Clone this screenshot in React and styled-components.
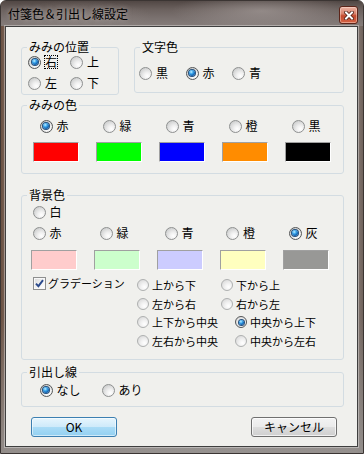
import React from 'react';
import styled, { createGlobalStyle } from 'styled-components';

const Global = createGlobalStyle`
  *, *::before, *::after { box-sizing: border-box; }
  html, body { margin: 0; padding: 0; background: #ffffff; }
  body { font-family: "Noto Sans CJK JP", "Noto Sans", sans-serif; color: #000; }
`;

const Win = styled.div`
  width: 364px;
  height: 454px;
  display: flex;
  flex-direction: column;
  border: 1px solid #3b3533;
  border-radius: 6px 6px 0 0;
  overflow: hidden;
  background:
    linear-gradient(180deg, rgba(0,0,0,0) 0%, rgba(0,0,0,0) 70%, rgba(150,146,144,0.9) 100%),
    linear-gradient(90deg, #6b5142 0%, #7d6a60 2%, #948c88 50%, #8a7d77 98%, #6e625c 100%);
`;

const TitleBar = styled.div`
  height: 25px;
  flex: none;
  display: flex;
  align-items: flex-start;
  padding: 5px 0 0 7px;
  background:
    radial-gradient(ellipse 90px 18px at 72% 40%, rgba(176,168,166,0.55), rgba(176,168,166,0) 100%),
    radial-gradient(ellipse 70px 16px at 22% 60%, rgba(150,140,136,0.5), rgba(150,140,136,0) 100%),
    linear-gradient(180deg, #514744 0%, #6c625f 35%, #7b7270 70%, #857d7a 100%);
`;

const Title = styled.div`
  font-size: 12px;
  line-height: 16px;
  color: #000;
  white-space: nowrap;
  text-shadow: 0 0 5px rgba(230, 226, 224, 0.55);
`;

const CloseBtn = styled.div`
  width: 19px;
  height: 18px;
  margin: 0 5px 0 auto;
  border: 1px solid #5c2419;
  border-radius: 3px;
  display: grid;
  place-items: center;
  background: linear-gradient(180deg, #eab2a3 0%, #d9836d 42%, #c44a2e 55%, #d46244 100%);
  box-shadow: inset 0 0 0 1px rgba(255, 230, 220, 0.45);
`;

const Client = styled.div`
  flex: 1;
  margin: 0 5px 6px 4px;
  border: 1px solid #3f3f3f;
  background: #f0f0ed;
  padding: 13px 13px 9px 15px;
  display: flex;
  flex-direction: column;
  box-shadow: 0 0 0 1px rgba(255, 255, 255, 0.35);
`;

const TopRow = styled.div`
  display: flex;
  gap: 15px;
  align-items: flex-start;
`;

const Group = styled.fieldset`
  margin: ${p => p.$mt || 0}px 0 0 0;
  padding: 0;
  min-width: 0;
  width: ${p => (p.$w ? `${p.$w}px` : '323px')};
  height: ${p => p.$h}px;
  border: 1px solid #d3dce2;
  border-radius: 3px;
`;

const Legend = styled.legend`
  margin-left: 5px;
  padding: 0 2px;
  font-size: 12px;
  line-height: 14px;
  color: #000;
`;

const RadioGrid = styled.div`
  display: grid;
  grid-template-columns: repeat(${p => p.$cols}, ${p => p.$colw}px);
  row-gap: ${p => p.$rgap || 0}px;
  grid-auto-rows: 16px;
  padding: ${p => p.$pt || 0}px 0 0 ${p => p.$pl}px;
`;

const ColorGrid = styled.div`
  display: grid;
  grid-template-columns: repeat(5, 63px);
  grid-template-rows: 16px 20px;
  row-gap: ${p => p.$rgap}px;
  padding: ${p => p.$pt || 0}px 0 0 ${p => p.$pl || 0}px;
`;

const Swatch = styled.div`
  width: 46px;
  height: 20px;
  background: ${p => p.$c};
  border: 1px solid;
  border-color: #a0a0a0 #ffffff #ffffff #a0a0a0;
`;

const BgInner = styled.div`
  display: flex;
  flex-direction: column;
  padding: 2px 0 0 9px;
`;

const GradGrid = styled.div`
  margin-top: 7px;
  display: grid;
  grid-template-columns: 106px 84px auto;
  grid-auto-rows: 16px;
  row-gap: 2.5px;
`;

const CheckItem = styled.div`
  display: inline-flex;
  align-items: center;
  gap: 2px;
  height: 16px;
  margin: -2px 0 0 2px;
  grid-row: 1;
  grid-column: 1;
`;

const CheckBox = styled.span`
  width: 13px;
  height: 13px;
  flex: none;
  border: 1px solid #8e8f8f;
  background: linear-gradient(135deg, #d8d9d9 0%, #f4f4f4 60%, #ffffff 100%);
  box-shadow: inset 0 0 0 1px #f8f8f8;
  display: grid;
  place-items: center;
`;

const CheckText = styled.span`
  font-size: 11px;
  line-height: 14px;
  white-space: nowrap;
`;

const RadioItem = styled.div`
  display: inline-flex;
  align-items: center;
  gap: ${p => (p.$small ? 3 : 4)}px;
  height: 16px;
  justify-self: start;
  margin-left: ${p => p.$shift || 0}px;
`;

const Dot = styled.span`
  flex: none;
  width: ${p => p.$size}px;
  height: ${p => p.$size}px;
  border-radius: 50%;
  border: 1px solid ${p => (p.$on ? '#545657' : p.$small ? '#aeb0b0' : '#8e9090')};
  background: ${p =>
    p.$small
      ? 'radial-gradient(circle at 65% 70%, #ffffff 0%, #f2f2f2 35%, #dcdcdc 80%, #cfcfcf 100%)'
      : 'radial-gradient(circle at 66% 72%, #ffffff 0%, #f1f1f1 30%, #d3d4d4 72%, #bcbdbd 100%)'};
  display: grid;
  place-items: center;
  &::after {
    content: '';
    display: ${p => (p.$on ? 'block' : 'none')};
    width: ${p => p.$size - 7}px;
    height: ${p => p.$size - 7}px;
    border-radius: 50%;
    background: radial-gradient(circle at 38% 32%, #c6f0ff 0%, #45aef0 30%, #0f63b3 65%, #073f7c 100%);
    box-shadow: 0 0 0 1px #24507d;
  }
`;

const RadioText = styled.span`
  font-size: ${p => (p.$small ? 11 : 12)}px;
  line-height: ${p => (p.$focus ? 12 : 14)}px;
  white-space: nowrap;
  border: ${p => (p.$focus ? '1px dotted #000' : 'none')};
  margin-left: ${p => (p.$focus ? -1 : 0)}px;
`;

const ButtonRow = styled.div`
  margin-top: 10px;
  display: flex;
  justify-content: space-between;
  padding: 0 7px 0 10px;
`;

const Button = styled.div`
  width: 86px;
  height: 20px;
  border-radius: 3px;
  border: 1px solid ${p => (p.$default ? '#3c7fb1' : '#707070')};
  background: ${p =>
    p.$default
      ? 'linear-gradient(180deg, #e6f5fd 0%, #cfeafa 48%, #a9dbf6 52%, #93d0f1 100%)'
      : 'linear-gradient(180deg, #f3f3f3 0%, #ebebeb 48%, #dddddd 52%, #cfcfcf 100%)'};
  box-shadow: inset 0 0 0 1px ${p => (p.$default ? 'rgba(255,255,255,0.55)' : 'rgba(255,255,255,0.7)')};
  display: flex;
  align-items: center;
  justify-content: center;
  font-size: 12px;
  line-height: 14px;
  color: #000;
`;

function Radio({ label, on, small, focus, shift, style }) {
  return (
    <RadioItem $small={small} $shift={shift} style={style}>
      <Dot $on={on} $small={small} $size={small ? 12 : 13} />
      <RadioText $small={small} $focus={focus}>{label}</RadioText>
    </RadioItem>
  );
}

const earColors = [
  { label: '赤', c: '#ff0000', on: true },
  { label: '緑', c: '#00ff00' },
  { label: '青', c: '#0000ff' },
  { label: '橙', c: '#ff8c00' },
  { label: '黒', c: '#000000' },
];

const bgColors = [
  { label: '赤', c: '#ffcccc', shift: 1.5 },
  { label: '緑', c: '#ccffcc', shift: 5.5 },
  { label: '青', c: '#ccccff', shift: 7.5 },
  { label: '橙', c: '#ffffbf', shift: 6 },
  { label: '灰', c: '#989896', shift: 5.5, on: true },
];

const gradients = [
  { label: '上から下', col: 2, row: 1 },
  { label: '下から上', col: 3, row: 1 },
  { label: '左から右', col: 2, row: 2 },
  { label: '右から左', col: 3, row: 2 },
  { label: '上下から中央', col: 2, row: 3 },
  { label: '中央から上下', col: 3, row: 3, shift: 14, on: true },
  { label: '左右から中央', col: 2, row: 4 },
  { label: '中央から左右', col: 3, row: 4, shift: 14 },
];

export default function App() {
  return (
    <>
      <Global />
      <Win>
        <TitleBar>
          <Title>付箋色＆引出し線設定</Title>
          <CloseBtn>
            <svg width="10" height="9" viewBox="0 0 10 9">
              <path d="M2 1.5 L8 7.5 M8 1.5 L2 7.5" stroke="#4a1a10" strokeWidth="3.6" strokeLinecap="square" />
              <path d="M2 1.5 L8 7.5 M8 1.5 L2 7.5" stroke="#ffffff" strokeWidth="2" strokeLinecap="square" />
            </svg>
          </CloseBtn>
        </TitleBar>
        <Client>
          <TopRow>
            <Group $w={98} $h={55}>
              <Legend>みみの位置</Legend>
              <RadioGrid $cols={2} $colw={42} $rgap={5} $pl={6}>
                <Radio label="右" on focus />
                <Radio label="上" />
                <Radio label="左" />
                <Radio label="下" />
              </RadioGrid>
            </Group>
            <Group $w={210} $h={53}>
              <Legend>文字色</Legend>
              <RadioGrid $cols={3} $colw={46.5} $pt={11} $pl={4}>
                <Radio label="黒" />
                <Radio label="赤" on />
                <Radio label="青" />
              </RadioGrid>
            </Group>
          </TopRow>

          <Group $h={76} $mt={3}>
            <Legend>みみの色</Legend>
            <ColorGrid $rgap={8} $pt={6} $pl={11}>
              {earColors.map(e => (
                <Radio key={e.label} label={e.label} on={e.on} shift={6.5} />
              ))}
              {earColors.map(e => (
                <Swatch key={e.label + 's'} $c={e.c} />
              ))}
            </ColorGrid>
          </Group>

          <Group $h={172} $mt={14}>
            <Legend>背景色</Legend>
            <BgInner>
              <Radio label="白" shift={1.5} />
              <ColorGrid $rgap={9} $pt={5}>
                {bgColors.map(e => (
                  <Radio key={e.label} label={e.label} on={e.on} shift={e.shift} />
                ))}
                {bgColors.map(e => (
                  <Swatch key={e.label + 's'} $c={e.c} />
                ))}
              </ColorGrid>
              <GradGrid>
                <CheckItem>
                  <CheckBox>
                    <svg width="9" height="9" viewBox="0 0 9 9">
                      <path d="M1 4.6 L3.4 7.2 L8 1.2" fill="none" stroke="#2b4a8c" strokeWidth="1.9" />
                    </svg>
                  </CheckBox>
                  <CheckText>グラデーション</CheckText>
                </CheckItem>
                {gradients.map(g => (
                  <Radio
                    key={g.label}
                    label={g.label}
                    small
                    on={g.on}
                    shift={g.shift}
                    style={{ gridColumn: g.col, gridRow: g.row }}
                  />
                ))}
              </GradGrid>
            </BgInner>
          </Group>

          <Group $h={42} $mt={5}>
            <Legend>引出し線</Legend>
            <RadioGrid $cols={2} $colw={62} $pt={3} $pl={17.5}>
              <Radio label="なし" on />
              <Radio label="あり" />
            </RadioGrid>
          </Group>

          <ButtonRow>
            <Button $default>OK</Button>
            <Button>キャンセル</Button>
          </ButtonRow>
        </Client>
      </Win>
    </>
  );
}
